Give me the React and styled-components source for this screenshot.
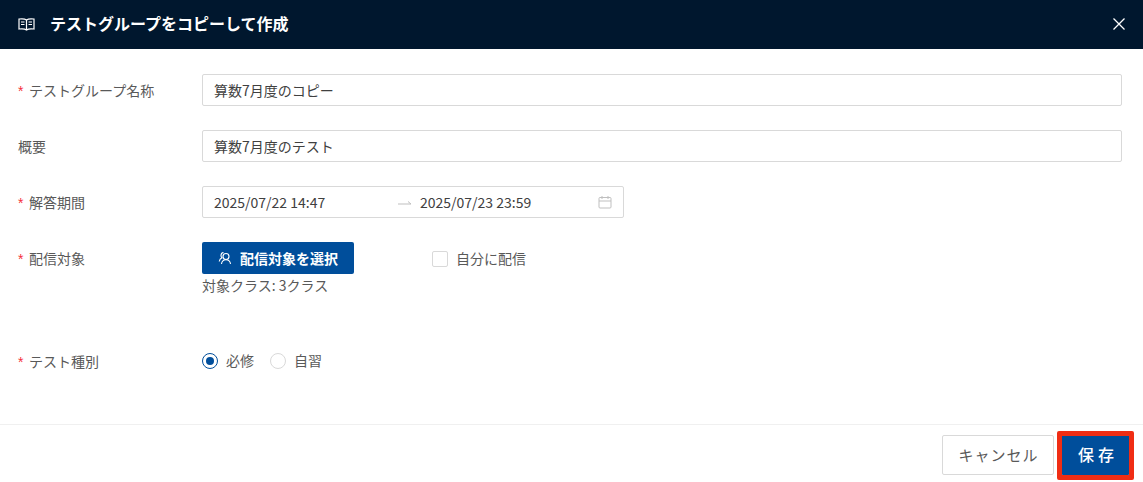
import React from "react";
import styled, { createGlobalStyle } from "styled-components";

const Global = createGlobalStyle`
  html, body { margin: 0; padding: 0; background: #fff; }
  * { box-sizing: border-box; }
  body { font-family: "Noto Sans CJK JP", "Noto Sans", sans-serif; color: #333; font-size: 14px; }
`;
const Modal = styled.div`
  width: 1143px; height: 482px; display: flex; flex-direction: column; overflow: hidden; background: #fff;
`;
const Header = styled.header`
  height: 49px; background: #00172e; color: #fff; display: flex; align-items: center; padding: 0 18px 2px;
`;
const Title = styled.h1`
  margin: -2px 0 0 15px; flex: 1; font-size: 16px; font-weight: 700; line-height: 24px;
`;
const Close = styled.button`
  all: unset; width: 14px; height: 14px; display: flex; margin-right: -1px;
`;
const Body = styled.main`
  flex: 1; padding: 25px 21px 0 18px; display: flex; flex-direction: column;
`;
const Row = styled.div`
  display: flex; align-items: flex-start; min-height: 32px; margin-bottom: ${p => p.$gap}px;
`;
const Label = styled.label`
  width: 184px; height: 32px; line-height: 32px; font-size: 14px; color: #595959; white-space: nowrap;
`;
const Star = styled.span`
  color: #f5303a; display: inline-block; line-height: 1; width: 11px; font-family: "Liberation Sans", sans-serif;
`;
const Field = styled.div`
  flex: 1; height: 32px; border: 1px solid #d9d9d9; border-radius: 2px; padding: 0 11px; line-height: 30px; font-size: 14px; color: #404040;
`;
const RangeBox = styled.div`
  width: 422px; height: 32px; border: 1px solid #d9d9d9; border-radius: 2px; padding: 0 11px 1px; display: flex; align-items: center; font-size: 14px; color: #404040;
`;
const RangeValue = styled.span`
  width: 184px;
`;
const RangeArrow = styled.span`
  width: 22px; color: #bfbfbf; display: flex; margin-top: 2px;
`;
const Spacer = styled.span`
  flex: 1;
`;
const CalIcon = styled.svg`
  margin-top: 1px;
`;
const Col = styled.div`
  display: flex; flex-direction: column; width: 230px;
`;
const Primary = styled.button`
  all: unset; box-sizing: border-box; width: 152px; height: 32px; background: #004e9b; color: #fff; border-radius: 2px; display: flex; align-items: center; justify-content: center; gap: 8px; font-weight: 700; font-size: 14px;
`;
const Note = styled.div`
  font-size: 14px; line-height: 22px; color: #595959;
`;
const CheckWrap = styled.label`
  display: flex; align-items: center; height: 32px; gap: 8px; font-size: 14px; color: #595959;
`;
const Box = styled.span`
  width: 16px; height: 16px; border: 1px solid #d9d9d9; border-radius: 2px; margin-top: 2px;
`;
const RadioGroup = styled.div`
  display: flex; align-items: center; height: 32px; padding-bottom: 2px;
`;
const RadioItem = styled.label`
  display: flex; align-items: center; gap: 8px; margin-right: 16px; font-size: 14px; color: #595959;
`;
const Radio = styled.span`
  width: 16px; height: 16px; border-radius: 50%; border: 1px solid ${p => p.$on ? "#004e9b" : "#d9d9d9"}; display: flex; align-items: center; justify-content: center; margin-top: 2px;
  &::after { content: ""; width: 8px; height: 8px; border-radius: 50%; background: ${p => p.$on ? "#004e9b" : "transparent"}; }
`;
const Footer = styled.footer`
  height: 58px; border-top: 1px solid #f0f0f0; display: flex; align-items: flex-start; justify-content: flex-end; padding: 10px 13px 0 0; gap: 7px;
`;
const Cancel = styled.button`
  all: unset; box-sizing: border-box; width: 112px; height: 40px; border: 1px solid #d9d9d9; border-radius: 2px; font-size: 15px; display: flex; align-items: center; justify-content: center; color: #595959; letter-spacing: 1px; padding: 0 0 2px 1px;
`;
const Save = styled.button`
  all: unset; box-sizing: border-box; width: 69px; height: 40px; background: #004e9b; color: #fff; border-radius: 2px; font-size: 16px; font-weight: 500; letter-spacing: 4px; display: flex; align-items: center; justify-content: center; position: relative; padding: 0 0 2px 5px;
  &::after { content: ""; position: absolute; inset: -4px -4px -5px -4px; border: 5px solid #f02d14; border-radius: 2px; }
`;

export default function App() {
  return (
    <Modal>
      <Global />
      <Header>
        <svg width="17" height="14" viewBox="0 0 17 14" fill="none" stroke="#fff" strokeWidth="1.2"><path d="M8.500 3C7 1.800 4 1.600 1 2v10c3-.4 6-.2 7.500 1 1.500-1.200 4.500-1.400 7.500-1V2c-3-.4-6-.2-7.500 1zM8.500 3v10M3 5h3.500M3 7.500h3.500M10.500 5H14M10.500 7.500H14"/></svg>
        <Title>テストグループをコピーして作成</Title>
        <Close aria-label="閉じる"><svg width="14" height="14" viewBox="0 0 14 14" stroke="#fff" strokeWidth="1.3"><path d="M1.500 1.500l11 11M12.500 1.500l-11 11"/></svg></Close>
      </Header>
      <Body>
        <Row $gap={24}><Label><Star>*</Star>テストグループ名称</Label><Field>算数7月度のコピー</Field></Row>
        <Row $gap={24}><Label>概要</Label><Field>算数7月度のテスト</Field></Row>
        <Row $gap={24}>
          <Label><Star>*</Star>解答期間</Label>
          <RangeBox>
            <RangeValue>2025/07/22 14:47</RangeValue>
            <RangeArrow><svg width="14" height="10" viewBox="0 0 14 10" fill="none" stroke="currentColor"><path d="M0 6h13M10 3.500L13 6"/></svg></RangeArrow>
            <span>2025/07/23 23:59</span>
            <Spacer />
            <CalIcon width="14" height="14" viewBox="0 0 14 14" fill="none" stroke="#bfbfbf"><rect x="1" y="2.500" width="12" height="10.500" rx="1"/><path d="M1 6h12M4 1v3M10 1v3"/></CalIcon>
          </RangeBox>
        </Row>
        <Row $gap={49}>
          <Label><Star>*</Star>配信対象</Label>
          <Col>
            <Primary>
              <svg width="14" height="14" viewBox="0 0 14 14" fill="none" stroke="#fff" strokeWidth="1.100"><circle cx="8" cy="5.500" r="3"/><path d="M3.500 13c.3-2.500 2-4.200 4.500-4.200s4.200 1.700 4.500 4.200M5.500 1.500C4 1.700 3 3 3 4.500c0 1 .5 1.800 1 2.300C2.500 7.500 1.500 9 1.200 10.500"/></svg>
              配信対象を選択
            </Primary>
            <Note>対象クラス: 3クラス</Note>
          </Col>
          <CheckWrap><Box />自分に配信</CheckWrap>
        </Row>
        <Row $gap={0}>
          <Label><Star>*</Star>テスト種別</Label>
          <RadioGroup>
            <RadioItem><Radio $on />必修</RadioItem>
            <RadioItem><Radio />自習</RadioItem>
          </RadioGroup>
        </Row>
      </Body>
      <Footer>
        <Cancel>キャンセル</Cancel>
        <Save>保存</Save>
      </Footer>
    </Modal>
  );
}
